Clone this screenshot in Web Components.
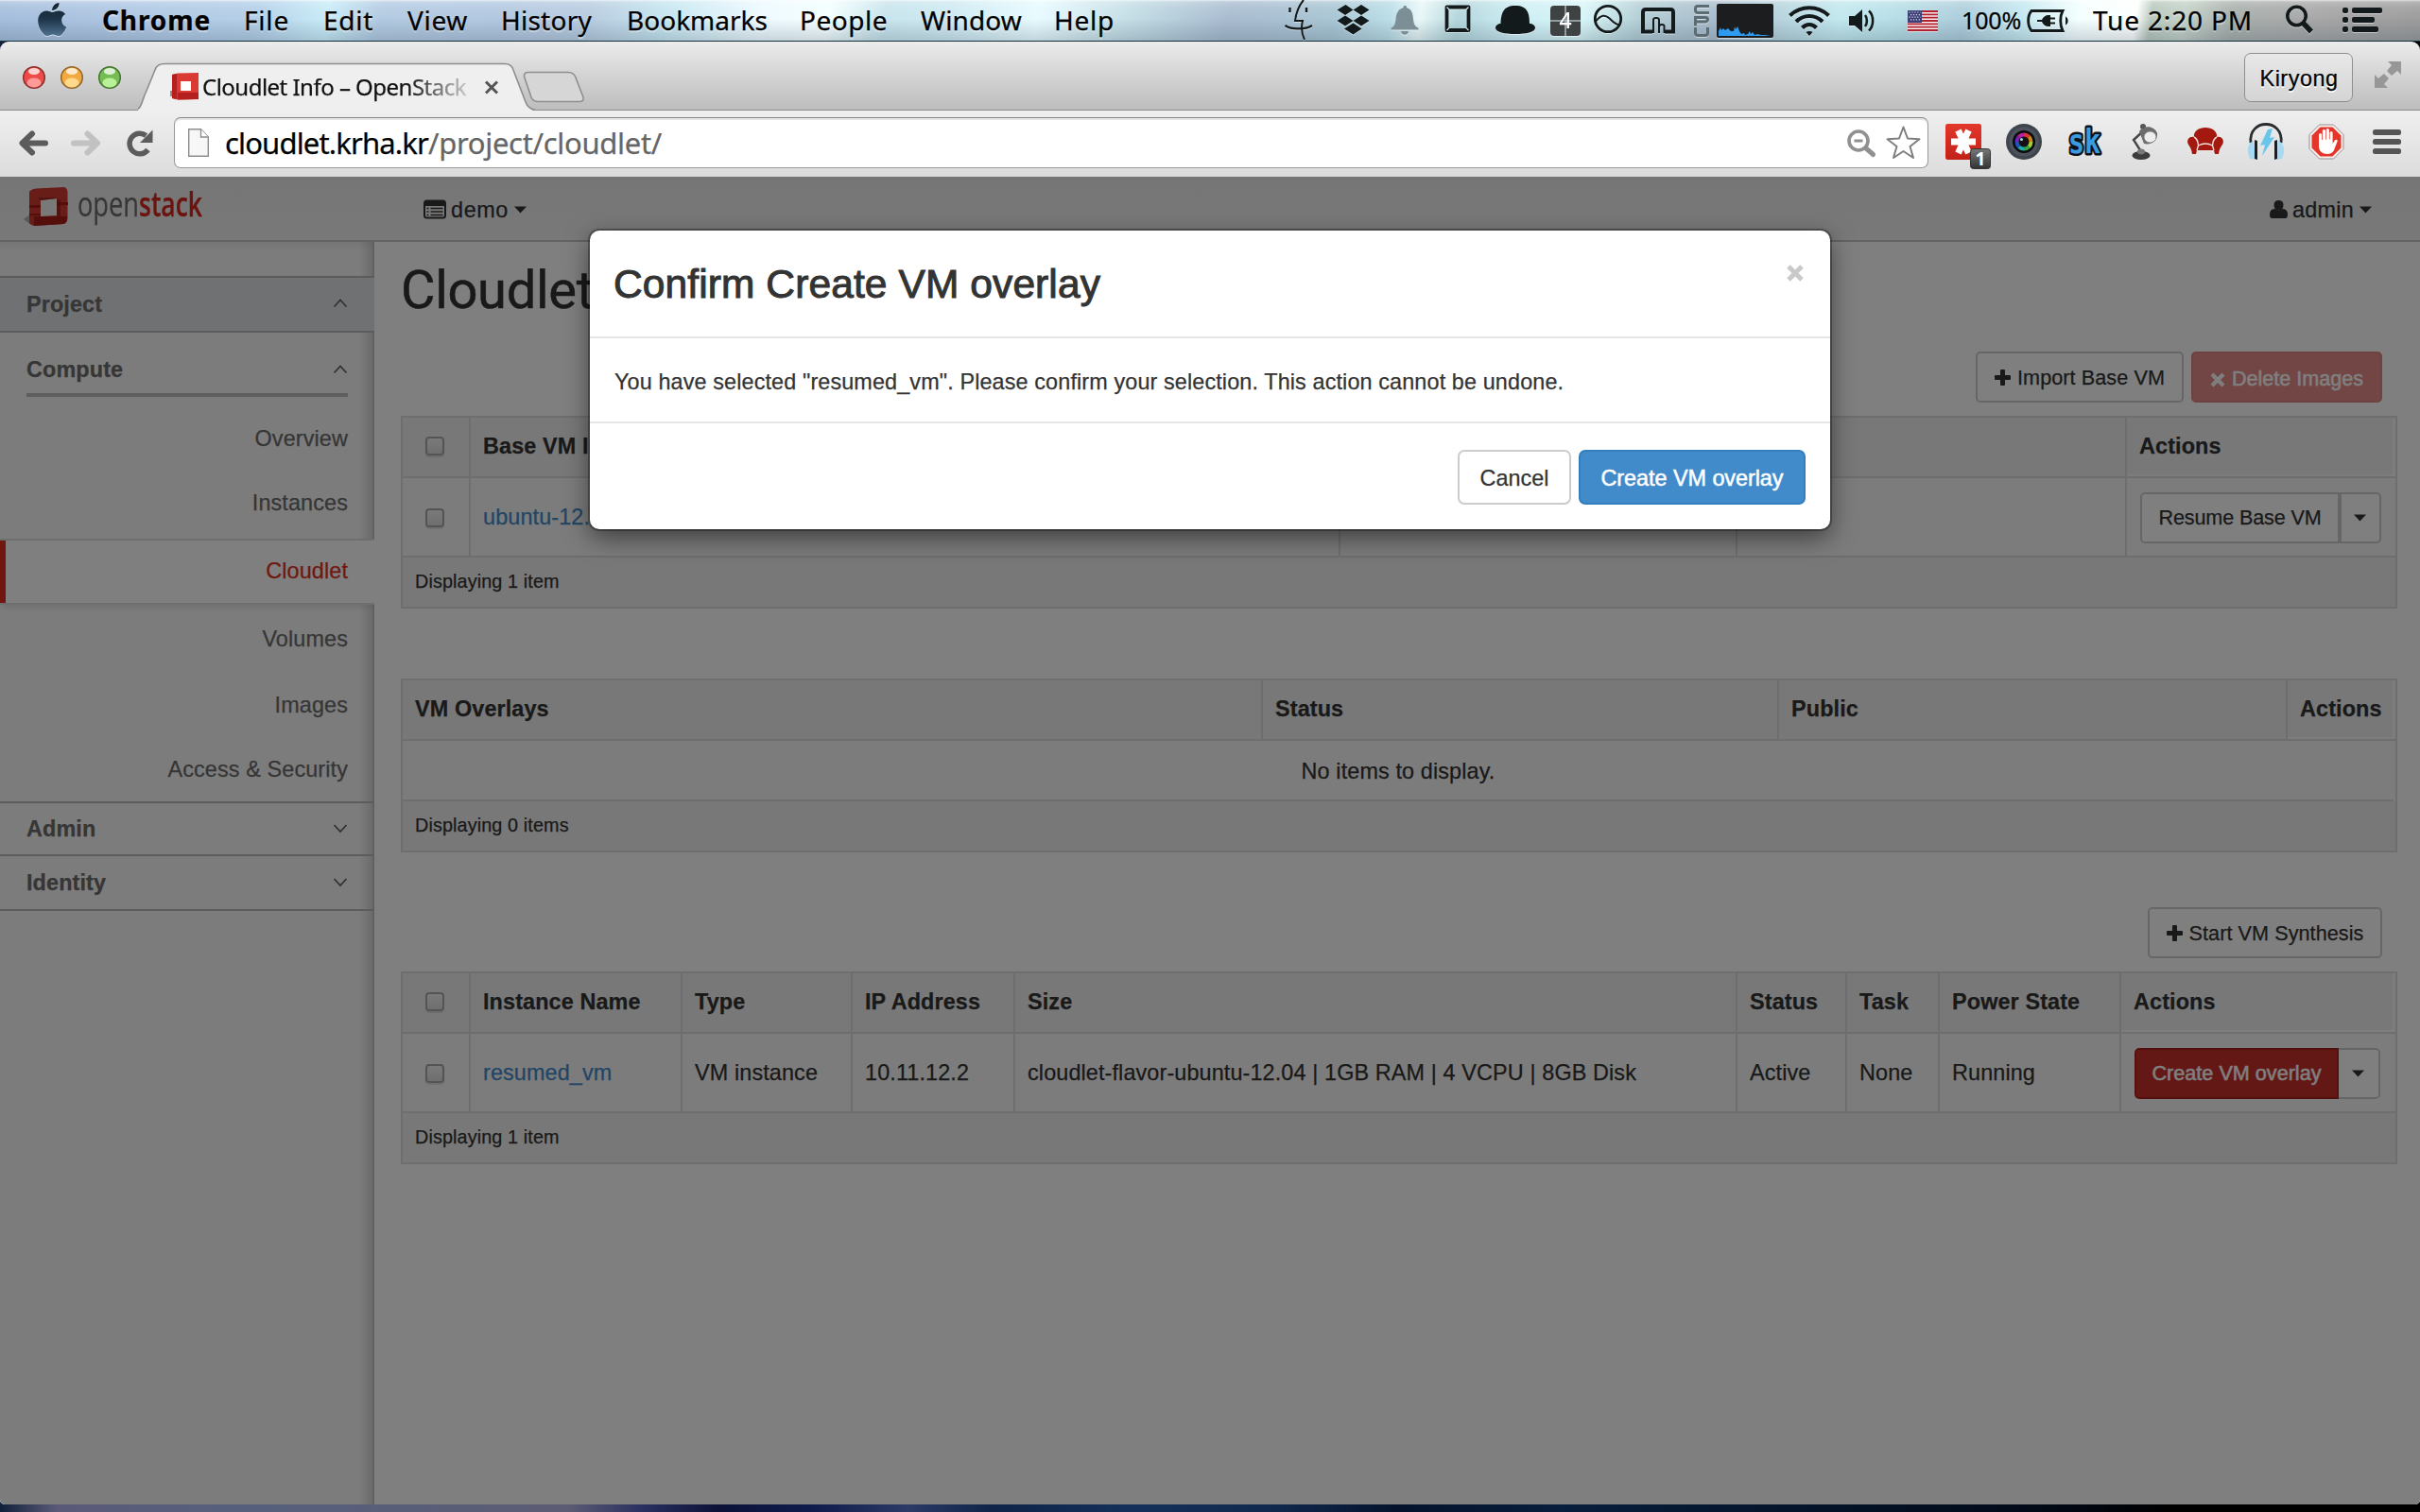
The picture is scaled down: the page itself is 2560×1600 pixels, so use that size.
<!DOCTYPE html>
<html lang="en">
<head>
<meta charset="utf-8">
<title>Cloudlet Info - OpenStack</title>
<style>
html,body{margin:0;height:100%;overflow:hidden;background:#0a1a38}
body{font-family:"Liberation Sans",Arial,sans-serif;font-size:23.4px;color:#333;letter-spacing:.12px;-webkit-text-stroke-width:.25px}
</style>
</head>
<body>
<desk-top></desk-top>
<script>
const svg = (x, y, w, h, body, style = '') =>
  `<svg viewBox="${x} ${y} ${w} ${h}" width="${w}" height="${h}" style="display:block;flex:none;-webkit-text-stroke-width:0;letter-spacing:0;${style}">${body}</svg>`;

class Base extends HTMLElement {
  connectedCallback() {
    if (this.shadowRoot) return;
    this.attachShadow({mode: 'open'}).innerHTML = this.view();
    this.ready && this.ready();
  }
}

/* Single-line label that spreads its letters over a given width. */
customElements.define('fit-text', class extends Base {
  view() {
    return `<style>:host{display:block;flex:none;white-space:nowrap}span{display:inline-block;transform-origin:0 50%;letter-spacing:0}</style><span><slot></slot></span>`;
  }
  ready() {
    const w = +this.getAttribute('w'), s = this.shadowRoot.querySelector('span');
    if (!w) return;
    this.style.width = w + 'px';
    const nat = s.getBoundingClientRect().width;
    if (this.hasAttribute('squeeze')) s.style.transform = `scaleX(${w / nat})`;
    else s.style.letterSpacing = (w - nat) / this.textContent.length + 'px';
  }
});

customElements.define('mac-menubar', class extends Base {
  view() {
    const K = '#131a1c';
    const menus = [['File',35,48],['Edit',36,53],['View',36,64],['History',35,96],['Bookmarks',37,149],['People',34,93],['Window',35,107],['Help',34,64]];
    const ic = (x, w, ml, b) => svg(x, 0, w, 43, b, `margin-left:${ml}px`);
    return `<style>
:host{display:flex;box-sizing:border-box;height:44px;align-items:flex-start;border-bottom:1px solid #14303a;color:#000;
font:28px/43px "Noto Sans","Open Sans",sans-serif;
background:
linear-gradient(180deg,rgba(255,255,255,.7) 0,rgba(255,255,255,.25) 2px,rgba(255,255,255,.1) 8px,rgba(40,60,80,0) 20px,rgba(40,60,80,.2) 43px),
linear-gradient(98deg,#a5bedc 0,#b0c8e4 150px,#b4cfe8 270px,#c8ecf8 345px,#b3cbe2 400px,#b2c8e0 520px,#b8cce0 620px,#c6e6f0 700px,#eefaff 800px,#f4ffff 870px,#c8e4ec 930px,#cfeaf2 1000px,#e8fbff 1090px,#c2dce4 1190px,#a9bcd0 1290px,#a9c6d4 1400px,#bcdfe8 1460px,#e8f8f8 1490px,#b4d6dc 1530px,#cdeef4 1590px,#d8f6f8 1660px,#b4cfd6 1720px,#a9bccb 1800px,#b6d2dc 1860px,#c2e8ee 1930px,#b8e0e8 1980px,#aecddc 2060px,#c4e8f0 2120px,#f4ffff 2180px,#fdfffd 2240px,#b9c8bd 2256px,#c4d2c8 2290px,#a9b0ac 2340px,#a8a8a8 2420px,#9a9a9a 2560px)}
fit-text{text-shadow:0 2px 1px rgba(255,255,255,.45);transform:translateX(1px)}svg{filter:drop-shadow(0 1.5px 0 rgba(255,255,255,.5))}
</style>
${ic(40,30,40,`<defs><linearGradient id="a" x1="0" y1="0" x2="0" y2="1"><stop offset="0" stop-color="#16232f"/><stop offset=".5" stop-color="#1f3549"/><stop offset="1" stop-color="#4f7191"/></linearGradient></defs><path fill="url(#a)" transform="translate(33 -.5) scale(1.85 1.75)" d="M18.71,19.5C17.88,20.74 17,21.95 15.66,21.97C14.32,22 13.89,21.18 12.37,21.18C10.84,21.18 10.37,21.95 9.1,22C7.79,22.05 6.8,20.68 5.96,19.47C4.25,17 2.94,12.45 4.7,9.39C5.57,7.87 7.13,6.91 8.82,6.88C10.1,6.86 11.32,7.75 12.11,7.75C12.89,7.75 14.37,6.68 15.92,6.84C16.57,6.87 18.39,7.1 19.56,8.82C19.47,8.88 17.39,10.1 17.41,12.63C17.44,15.65 20.06,16.66 20.09,16.67C20.06,16.74 19.67,18.11 18.71,19.5M13,3.5C13.73,2.67 14.94,2.04 15.94,2C16.07,3.17 15.6,4.35 14.9,5.19C14.21,6.04 13.07,6.7 11.95,6.61C11.8,5.46 12.36,4.26 13,3.5Z"/>`)}
<fit-text w="115" style="margin-left:37px;font-weight:700">Chrome</fit-text>
${menus.map(m => `<fit-text w="${m[2]}" style="margin-left:${m[1]}px">${m[0]}</fit-text>`).join('')}
${ic(1358,32,180,`<g fill="none" stroke="${K}" stroke-width="2"><path d="M1379 0C1374 6 1371 14 1370 22H1378C1376 30 1377 36 1380 42"/><path d="M1359.500 27C1366 31.500 1381 31.500 1388 27" stroke-width="2.200"/><path d="M1364.500 8v5M1382 8v5" stroke-width="2.400"/></g>`)}
${ic(1413,36,23,`<g fill="${K}"><path d="M1423.500 5l8 5.500-8.500 5.500-8.500-5.500zM1440 5l8.500 5.500-8.500 5.500-8.500-5.500zM1423 16.500l8.500 5.500-8.500 5.500-8.500-5.500zM1440 16.500l8.500 5.500-8.500 5.500-8.500-5.500zM1422 30.500l1.500-1 8-5 7.500 5 1.500 1-9 6z"/></g>`)}
${ic(1470,32,21,`<g fill="#7d8f96"><path d="M1484.500 8c0-3 3.500-3 3.500 0 6 2 6.500 7 7 12 .5 6 2 8 5.500 9.500v2h-29v-2c3.500-1.500 4.500-4 5-9.500.5-5 2-10 8-12z"/><path d="M1482 33h8c0 5-8 5-8 0z"/></g>`)}
${ic(1527,30,25,`<path fill="none" stroke="${K}" stroke-width="3.800" stroke-linejoin="round" d="M1530.500 7.500H1553.500V32H1530.500z"/><path stroke="#cfe4e8" stroke-width="1.200" d="M1530.500 7.500l2.500 2.500M1553.500 7.500l-2.500 2.500M1530.500 32l2.500-2.500M1553.500 32l-2.500-2.500"/>`)}
${ic(1581,44,24,`<path fill="${K}" d="M1587.500 25C1588 14 1590 6 1603 6S1618 14 1618 25C1621 25 1624 27 1624 29.500C1624 34 1614 36 1603 36S1582 34 1582 29.500C1582 27 1585 25 1587.500 25z"/>`)}
${ic(1640,32,15,`<rect x="1640" y="6" width="32" height="32" rx="4" fill="#3f4243"/><path d="M1656 6v32M1640 22h32" stroke="#a9b9be" stroke-width="1.500"/><text x="1656" y="30" text-anchor="middle" fill="#fff" font-family="Noto Sans" font-weight="500" font-size="23">4</text>`)}
${ic(1685,32,13,`<circle cx="1701" cy="20" r="13.700" fill="none" stroke="${K}" stroke-width="2.800"/><path d="M1688 22.500C1694 15.500 1698 15.500 1702 19S1708 26 1712.500 26" fill="none" stroke="${K}" stroke-width="2"/>`)}
${ic(1735,38,18,`<path fill="none" stroke="${K}" stroke-width="4" d="M1748 33.500H1738V13Q1738 10 1741 10H1767Q1770 10 1770 13V33.500H1761"/><path fill="none" stroke="${K}" stroke-width="2" d="M1749 35V21Q1749 19 1752 19T1755 21V35M1755 29Q1755 26 1758 26T1760.500 29V35"/>`)}
${ic(1791,18,18,`<g fill="none" stroke="#5b6c72" stroke-width="3"><path d="M1808 6.500H1796Q1793.500 6.500 1793.500 9V11Q1793.500 13.500 1796 13.500H1808M1793.500 27.500V18.500H1804Q1806.500 18.500 1806.500 20.500T1804 23H1794M1793.500 29V35Q1793.500 37.500 1796 37.500H1804Q1806.500 37.500 1806.500 35V29"/></g>`)}
${ic(1816,60,7,`<rect x="1816" y="4" width="60" height="36" rx="2" fill="#1b1d1e"/><path fill="#2d9bf0" d="M1818 38V33l2-4 1 3 2-2 2 2 3-2 3 3 3 0 1-5 1 3 2-3 2 5 2 3 3-1 1 2 3-1 2-3 1 3 2-2 2 3 3-1 4 1 4 0 6 1V38z"/>`)}
${ic(1891,46,15,`<g fill="none" stroke="${K}" stroke-width="4.200"><path d="M1893.500 16.500C1905 5.500 1923 5.500 1934.500 16.500M1900 23C1908 15 1920 15 1928 23M1906.500 29.500C1911 25 1917 25 1921.500 29.500"/></g><path fill="${K}" d="M1910.500 34c2-1.500 5-1.500 7 0l-3.500 4z"/>`)}
${ic(1954,32,17,`<path fill="${K}" d="M1956 17h6l8-7v24l-8-7h-6z"/><path d="M1973 16c2.500 3 2.500 9 0 12M1977 11.500c5.500 5 5.500 16 0 21" fill="none" stroke="${K}" stroke-width="2.600"/>`)}
${ic(2018,32,32,`<rect x="2018" y="11" width="32" height="22" fill="#f6f0ee"/><path stroke="#b3202e" stroke-width="1.800" d="M2018 12h32M2018 15.400h32M2018 18.700h32M2018 22h32M2018 25.400h32M2018 28.700h32M2018 32h32"/><rect x="2018" y="11" width="15" height="13" fill="#3d3f77"/><path stroke="#dfe0ee" stroke-width="1.200" stroke-dasharray="1.200 1.700" d="M2019.500 13h12M2021 15.600h11M2019.500 18.200h12M2021 20.800h11"/>`)}
<fit-text w="63" style="margin-left:24px;font-size:25px;margin-top:0">100%</fit-text>
${ic(2144,44,7,`<path fill="none" stroke="${K}" stroke-width="2.800" d="M2149 11.500H2182C2179 17 2179 27 2182 32.500H2149C2144.500 27 2144.500 17 2149 11.500z"/><path fill="${K}" d="M2185 17.500c3.500 1 3.500 8 0 9z M2155 21h5c1-3 4-5 7-5h2v2.500h5v2h-5v3h5v2h-5V28h-2c-3 0-6-2-7-5h-5z"/>`)}
<fit-text w="169" style="margin-left:25px">Tue 2:20 PM</fit-text>
${ic(2417,31,35,`<circle cx="2429.500" cy="17" r="9.700" fill="none" stroke="${K}" stroke-width="3.600"/><path stroke="${K}" stroke-width="5.500" d="M2436 24l9 9.500"/>`)}
${ic(2478,42,30,`<g fill="${K}"><rect x="2478" y="8" width="6" height="6" rx="2"/><rect x="2478" y="18" width="6" height="6" rx="2"/><rect x="2478" y="28" width="6" height="6" rx="2"/><rect x="2488" y="8" width="32" height="6" rx="2"/><rect x="2488" y="18" width="24" height="6" rx="2"/><rect x="2488" y="28" width="28" height="6" rx="2"/></g>`)}`;
  }
});

const stackMark = `<path fill="#d93a34" d="M182 79l6-1.500 22-.5v28l-22 .5-6-1.500z"/><path fill="#b3201d" d="M182 79l5-1v27l-5-1zM188 98h22v7l-22 .5z"/><path fill="#fff" d="M191 86h11v10h-11z"/><path fill="#8f8c8c" d="M180 96h2v6h-2z"/>`;

customElements.define('tab-strip', class extends Base {
  view() {
    const light = (cx, a, b, c) => `<circle cx="${cx}" cy="82" r="11.300" fill="${a}" stroke="${c}" stroke-width="1.500"/><ellipse cx="${cx}" cy="87.500" rx="7.500" ry="5" fill="${b}"/><ellipse cx="${cx}" cy="75.500" rx="6" ry="3.400" fill="#fff" opacity=".75"/>`;
    return `<style>
:host{display:flex;height:73px;box-sizing:border-box;border-bottom:1px solid #8d8d8d;background:linear-gradient(#ececec,#d8d8d8 40%,#bdbdbd)}
.tab{display:grid;margin-left:14px}.tab>*{grid-area:1/1}
.in{display:flex;align-items:flex-start;padding-left:40px}
.title{font:24px/36px "Noto Sans","Open Sans",sans-serif;color:#111;margin:30px 0 0 4px;width:283px;-webkit-mask-image:linear-gradient(90deg,#000 215px,rgba(0,0,0,.15) 282px)}
.who{display:flex;box-sizing:border-box;margin:12px 0 0 auto;width:115px;height:52px;border:1.500px solid #8f8f8f;border-radius:7px;background:linear-gradient(#e8e8e8,#d4d4d4);justify-content:center;align-items:center;color:#000;text-shadow:0 1.500px 0 #fff;padding:2px 0 0 1px}
</style>
${svg(20,44,112,72,light(36,'#ee4b48','#ff9a96','#8d2f2c')+light(76,'#f2a93f','#ffd98c','#94672a')+light(116,'#74bd55','#baf097','#48752f'),'margin-left:20px')}
<div class="tab">${svg(146,44,420,73,`<path fill="#efefef" d="M140 118C151 118 149 108 155 96L164 74Q166 67.500 174 67.500H534Q541 67.500 543 74L556 108Q559 116.500 568 118z"/><path fill="none" stroke="#8d8d8d" stroke-width="1.600" d="M140 116.500C151 116.500 149 108 155 96L164 74Q166 67.500 174 67.500H534Q541 67.500 543 74L556 108Q559 116 568 116.500"/>`,'margin-bottom:-1px')}
<div class="in">${svg(180,44,30,72,stackMark,'margin-left:-6px')}<div class="title"><fit-text w="279">Cloudlet Info – OpenStack</fit-text></div>
${svg(510,44,20,72,`<path stroke="#555" stroke-width="3" d="M514 86.500l12 12M526 86.500l-12 12"/>`,'margin-left:13px')}</div></div>
${svg(553,44,67,72,`<path fill="#d6d6d6" stroke="#8f8f8f" stroke-width="1.600" d="M559 76.500H601Q607 76.500 609 82L617 103Q618 107.500 613 107.500H569Q564 107.500 562 103L554.500 81Q554 76.500 559 76.500z"/>`,'margin-left:-13px')}
<div class="who"><fit-text w="83">Kiryong</fit-text></div>
${svg(2512,44,28,72,`<path fill="#979797" d="M2526 65h14v14l-4-4-6 5-5-5 5-6zM2512 79l4 4 6-5 5 5-5 6 4 4h-14z"/>`,'margin:0 20px 0 23px')}`;
  }
});

customElements.define('tool-bar', class extends Base {
  view() {
    const ext = (x, w, ml, b) => svg(x, 118, w, 69, b, `margin-left:${ml}px`);
    let hues = '';
    ['#d33','#c81','#ac3','#3a4','#2aa','#25b','#72b','#b29'].forEach((c, i) =>
      hues += `<path d="M2141 151L2141 141.500A9.500 9.500 0 0 1 2147.700 144.300z" fill="${c}" transform="rotate(${i*45} 2141 151)"/>`);
    return `<style>
:host{display:flex;height:70px;background:linear-gradient(#efefef,#dcdcdc);overflow:hidden}
.box{display:flex;box-sizing:border-box;margin:7px 0 0 22px;height:54px;width:1856px;border:1.500px solid #9a9a9a;border-top-color:#888;border-radius:7px;background:#fff;box-shadow:inset 0 2px 1px #e6e6e6;align-items:center;font:31px/50px "Noto Sans","Open Sans",sans-serif;color:#000}
.p{color:#666}
</style>
${svg(20,117,142,70,`<g fill="none" stroke-width="6" stroke-linecap="round" stroke-linejoin="round"><path stroke="#5c5c5c" d="M24 151.500H48M34 141.500L23.500 151.500L34 161.500"/><path stroke="#c1c1c1" d="M78 151.500H101M92.500 141.500L103 151.500L92.500 161.500"/></g><path fill="none" stroke="#5c5c5c" stroke-width="5.500" d="M156.500 158.500A10.800 10.800 0 1 1 154.500 143.500"/><path fill="#5c5c5c" d="M161.500 137.500V151H148z"/>`,'margin-left:20px')}
<div class="box">${svg(200,130,22,42,`<path fill="#f7f7f7" stroke="#8d8d8d" stroke-width="1.400" d="M200.700 136.700H213.500L221.300 145V165.300H200.700z"/><path fill="#fff" stroke="#8d8d8d" stroke-width="1.400" d="M213.500 136.700V145H221.300"/>`,'margin-left:14px')}
<fit-text w="215" style="margin-left:17px">cloudlet.krha.kr</fit-text><fit-text class="p" w="247">/project/cloudlet/</fit-text>
${svg(1954,126,78,50,`<circle cx="1966" cy="149" r="10" fill="none" stroke="#909090" stroke-width="3.600"/><path stroke="#909090" stroke-width="3" d="M1961.500 149h9"/><path stroke="#909090" stroke-width="5" stroke-linecap="round" d="M1974 157l7.500 6.500"/><path fill="#fff" stroke="#7f7f7f" stroke-width="2" stroke-linejoin="round" d="M2013.500 134.500L2018 146.500L2030.500 147.300L2020.500 155L2024 167L2013.500 160L2003 167L2006.500 155L1996.500 147.300L2009 146.500z"/>`,'margin:0 7px 0 auto')}</div>
${ext(2058,50,18,`<defs><linearGradient id="r" x1="0" y1="0" x2="0" y2="1"><stop offset="0" stop-color="#e4372c"/><stop offset="1" stop-color="#c22118"/></linearGradient><linearGradient id="b" x1="0" y1="0" x2="0" y2="1"><stop offset="0" stop-color="#777"/><stop offset="1" stop-color="#333"/></linearGradient></defs><rect x="2058" y="132" width="38" height="38" rx="2.500" fill="url(#r)"/><path stroke="#fff" stroke-width="7" d="M2064 151h26M2071.500 139l11 24M2082.500 139l-11 24"/><rect x="2084.500" y="158.500" width="21" height="21" rx="3" fill="url(#b)" stroke="#333"/><text x="2095" y="176" text-anchor="middle" font-family="Noto Sans" font-weight="700" font-size="19" fill="#fff">1</text>`)}
${ext(2121,40,13,`<circle cx="2141" cy="151" r="19" fill="#3f454d"/><circle cx="2141" cy="151" r="15.500" fill="#4c535c"/><circle cx="2141" cy="151" r="12" fill="#0b0b0e"/>${hues}<circle cx="2141" cy="151" r="5.500" fill="#151018"/><circle cx="2138.500" cy="148.500" r="1.500" fill="#9dd"/>`)}
${ext(2181,49,20,`<g font-family="DejaVu Sans Mono" font-weight="700" font-size="35" fill="#3a9be0" stroke="#0d1216" stroke-width="5" stroke-linejoin="round" paint-order="stroke"><text x="2188" y="163" textLength="34" lengthAdjust="spacingAndGlyphs">sk</text></g>`)}
${ext(2253,32,23,`<path fill="none" stroke="#444" stroke-width="2.400" d="M2266 163L2257 149L2268 139"/><ellipse cx="2265" cy="165.500" rx="9.500" ry="4.500" fill="#3d3d3d"/><ellipse cx="2265" cy="161.500" rx="4" ry="3" fill="#777"/><circle cx="2267" cy="135" r="3" fill="#555"/><path fill="#6c6c6c" d="M2263 140C2268 133 2279 134 2282 142C2283 149 2276 155 2268 153z"/><ellipse cx="2274.500" cy="146" rx="6.500" ry="6" fill="#eee" stroke="#888"/>`)}
${ext(2313,40,28,`<path fill="#a3190f" d="M2321 146C2320 140 2326 136 2333 136S2346 140 2345 146C2350 145 2353 149 2351.500 153C2350 156 2348 157 2347 164H2343L2342 160H2324L2323 164H2319C2318 157 2316 156 2314.500 153C2313 149 2316 145 2321 146z"/><path fill="none" stroke="#f4dedb" stroke-width="1.400" d="M2321 146Q2325 148 2325.500 155Q2333 151 2340.500 155Q2341 148 2345 146M2325.500 155L2324 160M2340.500 155L2342 160"/>`)}
${ext(2377,40,24,`<path fill="none" stroke="#2a2d30" stroke-width="2.800" d="M2381 152C2378 126 2416 126 2413 152"/><path fill="#a9d9f0" d="M2384 150C2378 152 2376 160 2380 169L2386 170zM2410 150C2416 152 2418 160 2414 169L2408 170z"/><path fill="#1c1f22" d="M2385 149l3 1v20l-3-1zM2409 149l-3 1v20l3-1z"/><path fill="#69c5ea" d="M2399 138l5-1-3 10 5-1-13 20 3-12-5 1z"/>`)}
${ext(2442,38,25,`<path fill="#f4f1f0" stroke="#9a8d8b" stroke-width="1" d="M2453.500 133h15l10.500 10.500v15L2468.500 169h-15L2443 158.500v-15z"/><path fill="#e5352b" d="M2454.500 135.500h13l9 9v13l-9 9h-13l-9-9v-13z"/><path fill="#fff" d="M2453 152v-9q1.500-2 3 0v6h.800v-10q1.500-2 3.200 0v9.500h.700V138q1.500-2 3.200 0v10.500h.700V141q1.500-2 3 0v12l2.200-3.500q2.200-1.500 3 .5L2469 160q-2 4-7 4-8 0-9-7z"/>`)}
${ext(2509,32,29,`<g fill="#555"><rect x="2510" y="138" width="30" height="6" rx="2.500"/><rect x="2510" y="148" width="30" height="6" rx="2.500"/><rect x="2510" y="158" width="30" height="6" rx="2.500"/></g>`)}`;
  }
});

const caret = () => svg(0, 0, 13, 8, '<path fill="currentColor" d="M0 .5h13L6.500 7.500z"/>');

customElements.define('top-bar', class extends Base {
  view() {
    return `<style>
:host{display:flex;height:67px;border-bottom:2px solid #c6c6c6;background:linear-gradient(#ececec,#f2f2f2)}
.word{display:flex;font:36px/44px "Open Sans","Noto Sans",sans-serif;color:#6c6c6c;margin:7px 0 0 9px}
.word b{font-weight:600;color:#d5271f}
.it{display:flex;align-items:center;height:26px;margin-top:22px;line-height:26px}
.it svg{margin-top:-1px}
</style>
${svg(25,187,48,60,`<path fill="#777" opacity=".5" d="M25 232l8-6v12z"/><path fill="#b3251d" d="M31 203l5-3v38l-5-2z"/><path fill="#d13a33" d="M31 203Q33 200 38 199.500L68 198Q71 199 71.500 203V231Q71 236 67 237L36 239Q32 238 31 235z"/><path fill="#a91f1a" d="M31 217h12v3H31zM60 214h12v3H60zM31 226h12v2H31zM36 229h35v3Q71 236 67 237L36 239z"/><path fill="#f2f2f2" d="M43 212l17-2v18l-17 1z"/><path fill="#7a1713" d="M60 210l4 2v18l-4-2zM43 212l-3-3h18l2 1z" opacity=".55"/>`,'margin-left:25px')}
<div class="word"><fit-text w="65" squeeze>open</fit-text><b><fit-text w="67" squeeze>stack</fit-text></b></div>
<div class="it" style="margin-left:234px">${svg(448,210,24,21,`<rect x="449" y="211.500" width="22" height="18" rx="2.500" fill="none" stroke="currentColor" stroke-width="2"/><path fill="currentColor" d="M449 212h22v5h-22z"/><path stroke="currentColor" stroke-width="1.600" d="M451.500 219.500h2M451.500 223h2M451.500 226.500h2M455.500 219.500h13M455.500 223h13M455.500 226.500h13"/>`)}<fit-text w="61" style="margin:0 6px 0 5px">demo</fit-text>${caret()}</div>
<div class="it" style="margin:22px 51px 0 auto">${svg(2400,212,19,20,`<path fill="currentColor" d="M2404.500 217q0-5 5-5t5 5q0 5.500-5 5.500t-5-5.500zM2400 227q0-5.500 5-6 4.500 3.500 9 0 5 .5 5 6 0 4-2.500 4h-14q-2.500 0-2.500-4z"/>`)}<fit-text w="65" style="margin:0 6px 0 5px">admin</fit-text>${caret()}</div>`;
  }
});

customElements.define('side-nav', class extends Base {
  view() {
    const chev = (up) => svg(0, 0, 16, 10, `<path fill="none" stroke="#5f5f5f" stroke-width="1.700" d="${up ? 'M1.500 8.500L8 1.500L14.500 8.500' : 'M1.500 1L8 8L14.500 1'}"/>`, 'margin-top:-2px');
    return `<style>
:host{display:block;width:396px;flex:none;color:#6c6c6c;background:linear-gradient(90deg,transparent 394px,#c2c2c2 394px),linear-gradient(90deg,transparent 380px,rgba(0,0,0,.14) 394px),linear-gradient(rgba(0,0,0,.05),transparent 10px),#f9f9f9}
.h{display:flex;box-sizing:border-box;font-weight:700;padding:0 28px 0 28px;justify-content:space-between;align-items:center}
.p{margin-top:36px;height:60px;border:solid #b8b8b8;border-width:2px 0;background:#e0e3e6}
.c{height:68px;margin:0 28px 10px;padding:15px 0 0;border-bottom:4px solid #bcbcbc}
.l{text-align:right;padding-right:28px}
.on{box-sizing:border-box;background:#fff;color:#e0301e;border:solid #dcdcdc;border-width:2px 0;box-shadow:inset 6px 0 0 #e0301e,0 4px 8px -2px rgba(0,0,0,.12)}
.g{height:58px;padding-top:1px;border-bottom:2px solid #b8b8b8}
</style>
<div class="h p">Project${chev(1)}</div>
<div class="h c">Compute${chev(1)}</div>
<div class="l" style="line-height:68px">Overview</div>
<div class="l" style="line-height:68px;margin-bottom:4px">Instances</div>
<div class="l on" style="line-height:65px;height:70px">Cloudlet</div>
<div class="l" style="line-height:72px;height:71px">Volumes</div>
<div class="l" style="line-height:70px;height:69px">Images</div>
<div class="l" style="line-height:68px;border-bottom:2px solid #b8b8b8;height:68px">Access &amp; Security</div>
<div class="h g" style="height:56px">Admin${chev(0)}</div>
<div class="h g">Identity${chev(0)}</div>`;
  }
});

customElements.define('ui-button', class extends Base {
  view() {
    return `<style>
:host{display:flex;box-sizing:border-box;height:54px;align-items:center;justify-content:center;gap:7px;border:2px solid #ccc;border-radius:5px;background:#fff;color:#333;font-size:21.600px;line-height:26px;white-space:nowrap;padding-top:1px}
:host([kind=danger]){background:#c9302c;border-color:#a9221f;color:#fff;-webkit-text-stroke:.5px #fff}
:host([kind=muted]){background:#e48c8a;border-color:#dd8480;color:#fff;-webkit-text-stroke:.5px #fff}
:host([kind=primary]){background:#428bca;border-color:#357ebd;color:#fff;-webkit-text-stroke:.5px #fff}
:host([big]){height:58px;font-size:23.400px;border-radius:7px}
</style><slot></slot>`;
  }
});

customElements.define('split-button', class extends Base {
  view() {
    const k = this.getAttribute('kind') || '';
    return `<style>:host{display:flex;margin-left:1px}.m{border-radius:5px 0 0 5px}.d{border-radius:0 5px 5px 0;margin-left:${k ? -2 : 0}px;width:${k ? 46 : 44}px;padding-right:2px}.m{position:relative}</style>
<ui-button class="m" kind="${k}" style="width:${this.getAttribute('w')}px"><fit-text w="${this.getAttribute('tw')}"><slot></slot></fit-text></ui-button><ui-button class="d">${caret()}</ui-button>`;
  }
  ready() {
    const f = this.shadowRoot.querySelector('fit-text'), s = f.shadowRoot.querySelector('span');
    s.style.letterSpacing = '0px';
    s.style.letterSpacing = (this.getAttribute('tw') - s.getBoundingClientRect().width) / this.textContent.length + 'px';
  }
});

customElements.define('check-box', class extends Base {
  view() { return `<style>:host{display:block;width:20px;height:20px;box-sizing:border-box;border:2px solid #a8a8a8;border-radius:4px;background:linear-gradient(#f4f4f4,#dedede);box-shadow:0 2px 1px rgba(0,0,0,.1)}</style>`; }
});

/* Grid table: the lines attribute holds the x offsets of the column rules. */
customElements.define('data-table', class extends Base {
  view() {
    const lines = this.getAttribute('lines').split(',').map(Number);
    const edges = [0, ...lines, 2108];
    const slots = (p, n) => Array.from({length: n}, (_, i) =>
      `<div class="cell" style="width:${edges[i+1]-edges[i]}px"><slot name="${p}${i}"></slot></div>`).join('');
    const empty = this.hasAttribute('empty');
    return `<style>
:host{display:block;border:2px solid #ddd;background:#f9f9f9}
.row{display:flex;height:82px;border-bottom:2px solid #ddd}
.row .cell{padding-top:1px}
.head{height:62px;background:#f1f1f1;font-weight:700}
.head .cell{padding:0 0 2px 13px}
.head .cell:last-child{box-shadow:inset -4px -3px 0 -1px #fafafa}
.cell{box-sizing:border-box;display:flex;align-items:center;padding-left:13px;white-space:nowrap}
.cell+.cell{border-left:2px solid #ddd}
.none{height:62px;line-height:64px;justify-content:center;margin-right:2px}
.foot{height:52px;line-height:51px;padding-left:13px;background:#f1f1f1;font-size:19.800px}
</style>
<div class="row head">${slots('h', edges.length - 1)}</div>
${empty ? '<div class="row none"><slot name="none"></slot></div>' : `<div class="row">${slots('c', edges.length - 1)}</div>`}
<div class="foot"><slot name="foot"></slot></div>`;
  }
});

const plus = svg(0, 0, 17, 17, '<path fill="currentColor" d="M6 1q0-1 1-1h3q1 0 1 1v5h5q1 0 1 1v3q0 1-1 1h-5v5q0 1-1 1H7q-1 0-1-1v-5H1q-1 0-1-1V7q0-1 1-1h5z"/>');
const cross = svg(0, 0, 16, 16, '<path fill="currentColor" d="M3.500.500L8 5l4.500-4.500 3 3L11 8l4.500 4.500-3 3L8 11l-4.500 4.500-3-3L5 8 .500 3.500z"/>', 'margin-top:2px');

customElements.define('cloudlet-panel', class extends Base {
  view() {
    const h = (a) => a.map((t, i) => `<span slot="h${i}">${t}</span>`).join('');
    const c = (a) => a.map((t, i) => `<span slot="c${i}">${t}</span>`).join('');
    const box = '<check-box style="margin-left:11px"></check-box>';
    return `<style>
:host{display:block;flex:1;min-width:0;background:#fff;padding:0 24px 0 28px}
h1{margin:0;height:99px;padding-top:17px;font:400 56px/68px Roboto,sans-serif;letter-spacing:-.3px;white-space:nowrap;-webkit-text-stroke-width:.5px}
.acts{display:flex;justify-content:flex-end;gap:8px;padding-right:16px;margin-bottom:14px}
a{color:#428bca}
</style>
<h1>Cloudlet</h1>
<div class="acts"><ui-button style="width:220px">${plus}<fit-text w="156">Import Base VM</fit-text></ui-button><ui-button kind="muted" style="width:202px;padding-top:3px">${cross}<fit-text w="139">Delete Images</fit-text></ui-button></div>
<data-table lines="70,990,1410,1822" style="margin-bottom:74px">${h([box,'Base VM Images','','','Actions'])}${c([box,'<a>ubuntu-12.04</a>','','','<split-button w="211" tw="172">Resume Base VM</split-button>'])}<span slot="foot">Displaying 1 item</span></data-table>
<data-table empty lines="908,1454,1992" style="margin-bottom:58px">${h(['VM Overlays','Status','Public','Actions'])}<span slot="none">No items to display.</span><span slot="foot">Displaying 0 items</span></data-table>
<div class="acts"><ui-button style="width:248px">${plus}<fit-text w="185">Start VM Synthesis</fit-text></ui-button></div>
<data-table lines="70,294,474,646,1410,1526,1624,1816">${h([box,'Instance Name','Type','IP Address','Size','Status','Task','Power State','Actions'])}${c([box,'<a>resumed_vm</a>','VM instance','10.11.12.2','cloudlet-flavor-ubuntu-12.04 | 1GB RAM | 4 VCPU | 8GB Disk','Active','None','Running','<split-button kind="danger" w="216" tw="179">Create VM overlay</split-button>'])}<span slot="foot">Displaying 1 item</span></data-table>`;
  }
});

customElements.define('confirm-dialog', class extends Base {
  view() {
    return `<style>
:host{display:block;width:1312px;height:316px;background:#fff;border-radius:10px;box-shadow:0 0 0 2px rgba(0,0,0,.3),0 9px 27px rgba(0,0,0,.5)}
header{display:flex;height:112px;border-bottom:2px solid #e5e5e5;padding:0 28px 0 25px;justify-content:space-between}
h4{margin:1px 0 0;font:400 42.500px/112px "Liberation Sans",Arial,sans-serif;-webkit-text-stroke:1px #333}
header svg{margin-top:36px}
p{margin:0;height:88px;line-height:92px;padding-left:26px;border-bottom:2px solid #e5e5e5}
footer{display:flex;justify-content:flex-end;gap:8px;padding:28px 26px 0}
</style>
<header><h4><fit-text w="515"><slot name="title"></slot></fit-text></h4>${svg(0,0,18,18,'<path stroke="#c9c9c9" stroke-width="5" d="M2 2l14 14M16 2L2 16"/>')}</header>
<p><slot></slot></p>
<footer><ui-button big style="width:120px"><fit-text w="73">Cancel</fit-text></ui-button><ui-button big kind="primary" style="width:240px"><fit-text w="193">Create VM overlay</fit-text></ui-button></footer>`;
  }
  ready() {
    const s = this.shadowRoot.querySelector('h4 fit-text').shadowRoot.querySelector('span');
    s.style.letterSpacing = '0px';
    s.style.letterSpacing = (515 - s.getBoundingClientRect().width) / 25 + 'px';
  }
});

customElements.define('browser-window', class extends Base {
  view() {
    return `<style>
:host{display:block;height:1548px;border-radius:9px 9px 5px 5px;overflow:hidden}
.page{position:relative;height:1405px;background:#fff}
.cols{display:flex;height:1336px}
.shade{position:absolute;inset:0;background:rgba(0,0,0,.5);display:flex;justify-content:center;align-items:flex-start;padding-top:57px;box-sizing:border-box}
</style>
<tab-strip></tab-strip><tool-bar></tool-bar>
<div class="page"><top-bar></top-bar><div class="cols"><side-nav></side-nav><cloudlet-panel></cloudlet-panel></div>
<div class="shade"><confirm-dialog><span slot="title">Confirm Create VM overlay</span>You have selected "resumed_vm". Please confirm your selection. This action cannot be undone.</confirm-dialog></div></div>`;
  }
});

customElements.define('desk-top', class extends Base {
  view() {
    return `<style>
:host{display:block;width:2560px;height:1600px;overflow:hidden;background:linear-gradient(90deg,#10203a 0,#5a5a78 60px,#56607c 250px,#5c5c74 600px,#2a3060 680px,#0c1238 760px,#101c4c 860px,#2b3a66 960px,#0f2448 1050px,#14305a 1200px,#10284c 1350px,#04122c 1480px,#071e3c 1650px,#04142a 1900px,#020a18 2150px,#000 2300px)}
</style><mac-menubar></mac-menubar><browser-window></browser-window>`;
  }
});
</script>
</body>
</html>
